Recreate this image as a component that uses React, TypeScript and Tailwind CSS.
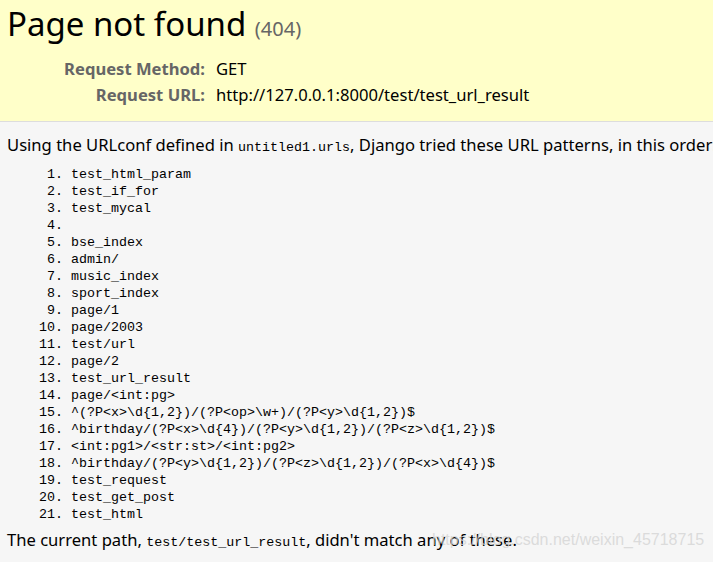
import React from "react";

const patterns: string[] = [
  "test_html_param",
  "test_if_for",
  "test_mycal",
  "",
  "bse_index",
  "admin/",
  "music_index",
  "sport_index",
  "page/1",
  "page/2003",
  "test/url",
  "page/2",
  "test_url_result",
  "page/<int:pg>",
  "^(?P<x>\\d{1,2})/(?P<op>\\w+)/(?P<y>\\d{1,2})$",
  "^birthday/(?P<x>\\d{4})/(?P<y>\\d{1,2})/(?P<z>\\d{1,2})$",
  "<int:pg1>/<str:st>/<int:pg2>",
  "^birthday/(?P<y>\\d{1,2})/(?P<z>\\d{1,2})/(?P<x>\\d{4})$",
  "test_request",
  "test_get_post",
  "test_html",
];

const sans = "font-['Noto_Sans',sans-serif]";
const mono = "font-['Liberation_Mono',monospace]";

const App: React.FC = () => {
  return (
    <div className={`relative w-[713px] h-[562px] overflow-hidden bg-[#f6f6f6] text-black ${sans}`}>
      <div className="bg-[#ffffc9] border-b border-[#dddddd] h-[122px] px-[7px] pt-[2px]">
        <h1 className="text-[33px] leading-[44px] font-normal">
          Page not found{" "}
          <span className="text-[20px] text-[#666666]">(404)</span>
        </h1>
        <div className="grid grid-cols-[198px_1fr] gap-x-[11px] gap-y-[6px] mt-[8px] text-[16.6px] leading-[20px]">
          <div className="text-right font-bold text-[#666666]">Request Method:</div>
          <div>GET</div>
          <div className="text-right font-bold text-[#666666]">Request URL:</div>
          <div>http://127.0.0.1:8000/test/test_url_result</div>
        </div>
      </div>
      <div className="px-[7px] pt-[12px] text-[16.6px] whitespace-nowrap">
        <p className="leading-[22px]">
          Using the URLconf defined in{" "}
          <code className={`${mono} text-[13.33px]`}>untitled1.urls</code>, Django tried these URL patterns, in
          this order:
        </p>
        <ol className={`list-decimal pl-[64px] mt-[7px] ${mono} text-[13.33px] leading-[17px]`}>
          {patterns.map((p, i) => (
            <li key={i} className="h-[17px]">
              {p}
            </li>
          ))}
        </ol>
        <p className="leading-[22px] mt-[6px]">
          The current path, <code className={`${mono} text-[13.33px]`}>test/test_url_result</code>, didn't match any
          of these.
        </p>
      </div>
      <div className="absolute left-[432px] top-[529px] font-['Liberation_Sans',sans-serif] text-[16px] text-[#d4d4d4]/80 leading-[22px] whitespace-nowrap">
        https://blog.csdn.net/weixin_45718715
      </div>
    </div>
  );
};

export default App;
